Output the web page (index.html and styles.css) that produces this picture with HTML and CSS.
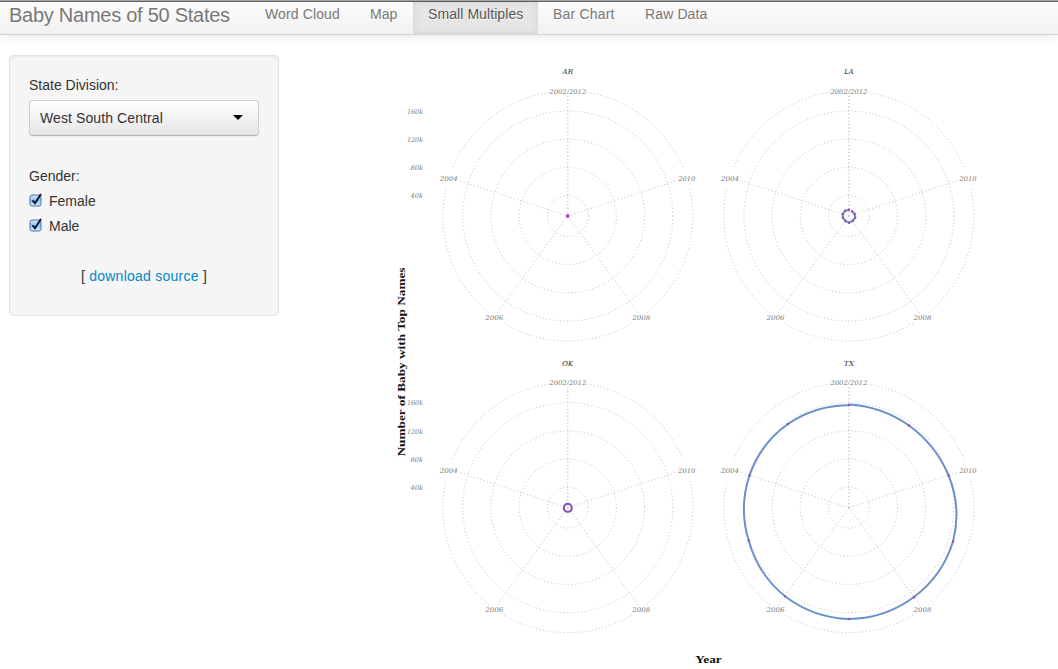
FILE: index.html
```html
<!DOCTYPE html>
<html lang="en">
<head>
<meta charset="utf-8">
<title>Baby Names of 50 States</title>
<link rel="stylesheet" href="styles.css">
</head>
<body>
<header class="navbar">
  <div class="brand">Baby Names of 50 States</div>
  <nav class="tabs">
    <a class="tab tab-cloud">Word Cloud</a>
    <a class="tab tab-map">Map</a>
    <a class="tab tab-multiples active">Small Multiples</a>
    <a class="tab tab-bar">Bar Chart</a>
    <a class="tab tab-raw">Raw Data</a>
  </nav>
</header>
<main class="content">
  <aside class="well">
    <div class="label">State Division:</div>
    <div class="select"><span>West South Central</span><span class="caret"></span></div>
    <div class="label gender">Gender:</div>
    <div class="check">
      <svg class="box" width="15" height="16" viewBox="0 0 15 16"><rect x="1" y="3" width="11" height="11" rx="2" fill="url(#blue)" stroke="#5770a8"/><path d="M3.5 8.3 6 11.2 12 2" fill="none" stroke="#07152f" stroke-width="2"/></svg>
      <span>Female</span>
    </div>
    <div class="check">
      <svg class="box" width="15" height="16" viewBox="0 0 15 16"><rect x="1" y="3" width="11" height="11" rx="2" fill="url(#blue)" stroke="#5770a8"/><path d="M3.5 8.3 6 11.2 12 2" fill="none" stroke="#07152f" stroke-width="2"/></svg>
      <span>Male</span>
    </div>
    <div class="source">[ <a>download source</a> ]</div>
  </aside>
  <svg class="chart" width="668" height="634" viewBox="390 35 668 634">
    <defs>
      <linearGradient id="blue" x1="0" y1="0" x2="0" y2="1"><stop offset="0" stop-color="#d8eafc"/><stop offset=".5" stop-color="#8fc3f3"/><stop offset="1" stop-color="#cdf0ff"/></linearGradient>
      <g id="grid">
        <g class="grid">
          <circle r="20.4"/><circle r="48.6"/><circle r="76.8"/><circle r="105"/>
          <path d="M19 -123.6A125 125 0 0 1 115 -49M122 -27A125 125 0 0 1 79 97M64 107.400A125 125 0 0 1 -64 107.400M-79 97A125 125 0 0 1 -122 -27M-115 -49A125 125 0 0 1 -19 -123.600"/>
          <path d="M0 0V-120M0 0 109 -35.500M0 0 71 97.500M0 0-71 97.500M0 0-109 -35.500"/>
          <path d="M0 0V-120" stroke-opacity=".6"/>
        </g>
        <g class="year">
          <text x="0" y="-122.400" textLength="37" lengthAdjust="spacingAndGlyphs">2002/2012</text>
          <text x="119" y="-35" textLength="17" lengthAdjust="spacingAndGlyphs">2010</text>
          <text x="73.500" y="104" textLength="18" lengthAdjust="spacingAndGlyphs">2008</text>
          <text x="-73.500" y="104" textLength="18" lengthAdjust="spacingAndGlyphs">2006</text>
          <text x="-119" y="-35" textLength="18" lengthAdjust="spacingAndGlyphs">2004</text>
        </g>
      </g>
      <g id="scale" class="scale">
        <text x="423" y="113.500" textLength="16" lengthAdjust="spacingAndGlyphs">160k</text>
        <text x="423" y="142" textLength="16" lengthAdjust="spacingAndGlyphs">120k</text>
        <text x="423" y="170.300" textLength="12.500" lengthAdjust="spacingAndGlyphs">80k</text>
        <text x="423" y="198.300" textLength="12.500" lengthAdjust="spacingAndGlyphs">40k</text>
      </g>
    </defs>
    <use href="#scale"/><use href="#scale" y="291.700"/>
    <use href="#grid" x="567.800" y="216"/>
    <use href="#grid" x="848.900" y="216"/>
    <use href="#grid" x="567.800" y="507.700"/>
    <use href="#grid" x="848.900" y="507.700"/>
    <g class="state">
      <text x="567.800" y="74" textLength="10.500" lengthAdjust="spacingAndGlyphs">AR</text>
      <text x="849" y="74" textLength="9.500" lengthAdjust="spacingAndGlyphs">LA</text>
      <text x="567.800" y="366" textLength="11" lengthAdjust="spacingAndGlyphs">OK</text>
      <text x="849" y="366" textLength="10.500" lengthAdjust="spacingAndGlyphs">TX</text>
    </g>
    <circle cx="567.700" cy="216" r="1.900" fill="#9b4fae"/>
    <path class="series" d="M849 209.700 845.200 210.800 842.700 214 842.900 217.700 845.300 221 849 222.700 852.700 220.900 855.200 217.700 854.700 214 852 211.300"/>
    <path class="dots" d="M849 209.700h.01M845.200 210.800h.01M842.700 214h.01M842.900 217.700h.01M845.300 221h.01M849 222.700h.01M852.700 220.900h.01M855.200 217.700h.01M854.700 214h.01M852 211.300h.01"/>
    <circle cx="567.800" cy="507.900" r="4" fill="none" stroke="#8e59b1" stroke-width="2.200"/>
    <path class="series" d="M849 405.200A108 108 0 0 0 788 424 105 105 0 0 0 749.500 475.500 106 106 0 0 0 748.700 540.500 108 108 0 0 0 785 596.200 112 112 0 0 0 849 619 111 111 0 0 0 914 597 109 109 0 0 0 953 541.500 105 105 0 0 0 948.600 475.500 118 118 0 0 0 909 425.500 118 118 0 0 0 849 404.600"/>
    <path class="dots" d="M849 405h.01M788 424h.01M749.500 475.500h.01M748.700 540.500h.01M785 596.200h.01M849 619h.01M914 597h.01M953 541.500h.01M948.600 475.500h.01M909 425.500h.01"/>
    <text class="axis" transform="translate(404.500 362) rotate(-90)" textLength="189" lengthAdjust="spacingAndGlyphs">Number of Baby with Top Names</text>
    <text class="axis" x="708.500" y="663" textLength="26.500" lengthAdjust="spacingAndGlyphs">Year</text>
  </svg>
</main>
</body>
</html>
```
FILE: styles.css
```css
* { box-sizing: border-box; }
body {
  margin: 0;
  height: 669px;
  overflow: hidden;
  background: #fff;
  color: #333;
  font: 14px/20px "Liberation Sans", Arial, sans-serif;
}
.navbar {
  display: flex;
  height: 35px;
  padding-left: 9px;
  border-top: 1px solid #a6a6a6;
  border-bottom: 1px solid #d4d4d4;
  background: linear-gradient(#5e5e5e 1px, #fcfcfc 1px, #f1f1f1);
  box-shadow: 0 1px 10px rgba(0, 0, 0, .1);
  color: #777;
  text-shadow: 0 1px 0 #fff;
}
.brand {
  width: 241px;
  padding-top: 4px;
  font-size: 20px;
  letter-spacing: -.26px;
  white-space: nowrap;
}
.tabs { display: flex; padding-top: 1px; }
.tab {
  padding: 2px 0 0 15px;
  white-space: nowrap;
}
.tab-cloud { width: 105px; letter-spacing: .12px; }
.tab-map { width: 58px; }
.tab-multiples { width: 125px; letter-spacing: .08px; }
.tab-bar { width: 92px; letter-spacing: .2px; }
.tab-raw { width: 92px; letter-spacing: .12px; }
.active {
  background: #e5e5e5;
  box-shadow: inset 0 0 7px rgba(0, 0, 0, .08);
  color: #555;
}
.content { display: flex; justify-content: space-between; }
.well {
  width: 270px;
  height: 261px;
  margin: 20px 0 0 9px;
  padding: 19px;
  border: 1px solid #e3e3e3;
  border-radius: 4px;
  background: #f5f5f5;
  box-shadow: inset 0 1px 1px rgba(0, 0, 0, .05);
}
.label { height: 25px; }
.select {
  display: flex;
  align-items: center;
  justify-content: space-between;
  height: 36px;
  padding: 0 15px 0 10px;
  border: 1px solid #d0d0d0;
  border-bottom-color: #b3b3b3;
  border-radius: 4px;
  background: linear-gradient(#fefefe, #e6e6e6);
  box-shadow: 0 1px 2px rgba(0, 0, 0, .05);
  letter-spacing: .1px;
}
.caret {
  margin-bottom: 1px;
  border: 5px solid transparent;
  border-top-color: #000;
  border-bottom: 0;
}
.gender { margin-top: 30px; }
.check { display: flex; height: 25px; gap: 5px; }
.box { flex: none; margin-top: 1px; }
.source { margin-top: 25px; text-align: center; letter-spacing: .25px; }
.source a { color: #08c; }
.chart {
  flex: none;
  font-family: "DejaVu Serif", serif;
}
.grid {
  fill: none;
  stroke: #bdbdbd;
  stroke-width: 1;
  stroke-dasharray: 1 2.5;
}
.year, .scale { font-size: 6.5px; font-style: italic; fill: #777; }
.year, .state { text-anchor: middle; }
.scale { text-anchor: end; }
.state { font-size: 7px; font-style: italic; fill: #222; }
.series { fill: none; stroke: #6b91ca; stroke-width: 2; }
.dots { stroke: #9650b0; stroke-width: 2.4; stroke-linecap: round; }
.axis {
  font: bold 11px "Liberation Serif", serif;
  text-anchor: middle;
  fill: #111;
}
```
